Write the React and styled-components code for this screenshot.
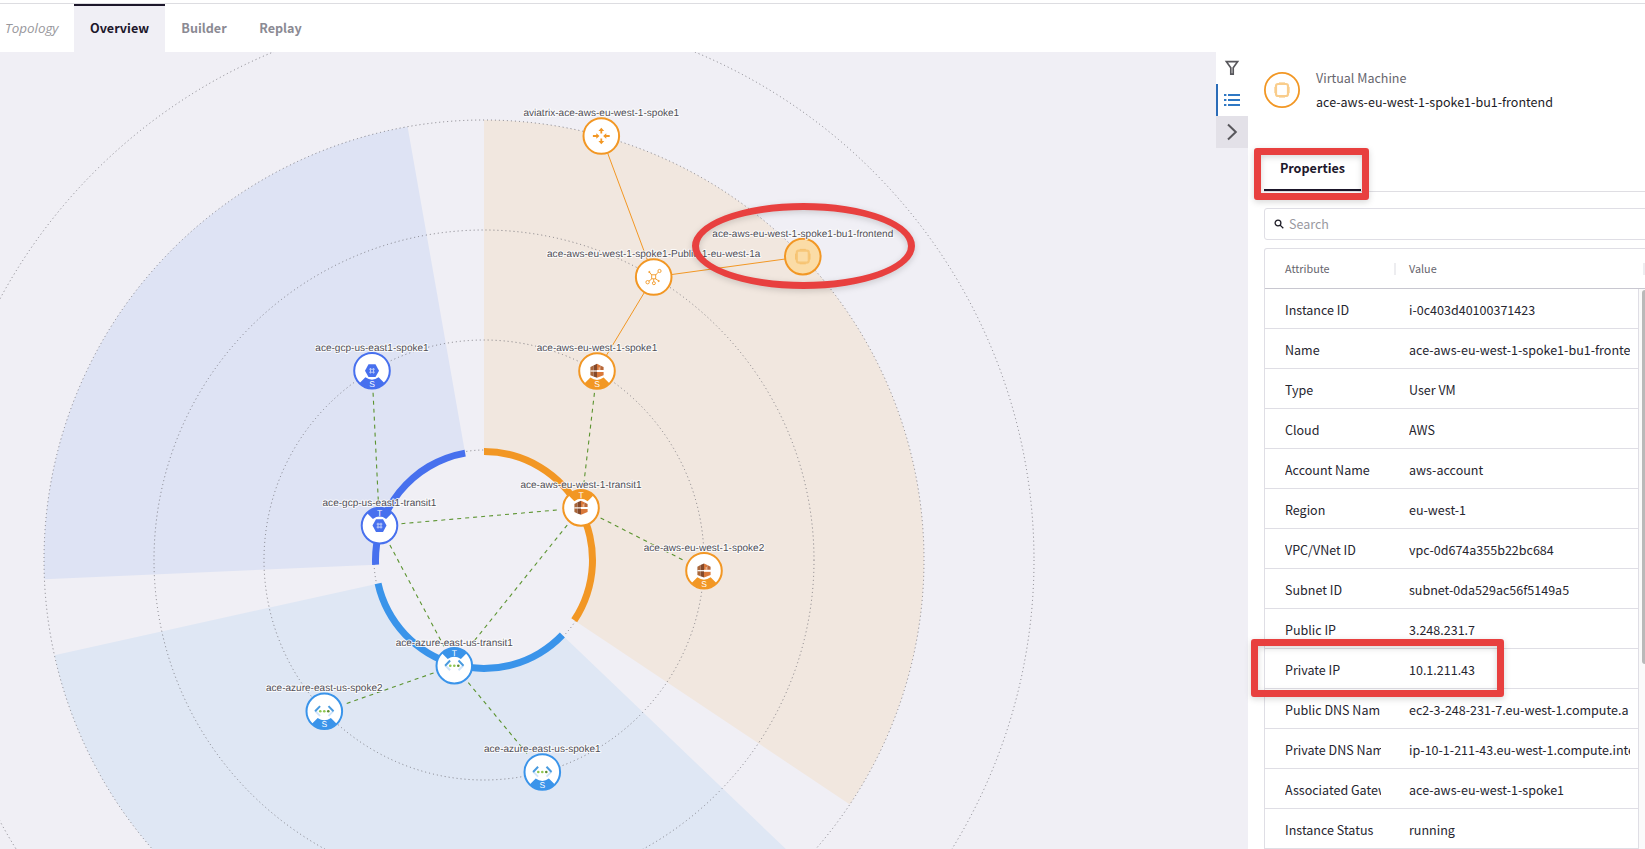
import React from "react";
import styled, { createGlobalStyle, css } from "styled-components";

const ORANGE = "#f29724";
const AZURE = "#3a94ea";
const GCP = "#4770ee";
const RED = "#e8403f";

const GlobalStyle = createGlobalStyle`
  * { box-sizing: border-box; }
  html, body { margin: 0; padding: 0; }
  body {
    background: #fff;
    color: #26252f;
    font-family: "Noto Sans CJK SC", "Open Sans", sans-serif;
    overflow: hidden;
  }
`;

const Page = styled.div`
  position: relative;
  display: flex;
  flex-direction: column;
  width: 1645px;
  height: 849px;
  overflow: hidden;
`;

const Header = styled.header`
  display: flex;
  flex: none;
  height: 49px;
  margin-top: 3px;
  border-top: 1px solid #dddde1;
`;

const SectionTitle = styled.div`
  width: 74px;
  padding-left: 5px;
  font: italic 13.4px/48px "Open Sans", sans-serif;
  color: #98979c;
`;

const Tab = styled.button`
  padding: 0 0 2px;
  border: 0;
  border-top: 2px solid transparent;
  background: none;
  width: ${(p) => p.$width}px;
  font: 700 12.6px/40px "Noto Sans CJK SC", sans-serif;
  color: #8b8a93;
  text-align: center;
  ${(p) =>
    p.$active &&
    css`
      background: #f0eff5;
      border-top-color: #1d172b;
      color: #1d172b;
    `}
`;

const Body = styled.main`
  display: flex;
  flex: 1;
  min-height: 0;
`;

const Canvas = styled.section`
  flex: none;
  width: 1216px;
  background: #f0eff5;
  overflow: hidden;
  svg { display: block; }
`;

const Rail = styled.nav`
  display: flex;
  flex-direction: column;
  flex: none;
  width: 32px;
  background: #f0eff5;
`;

const RailButton = styled.button`
  display: flex;
  align-items: center;
  justify-content: center;
  width: 32px;
  height: 32px;
  padding: 0;
  border: 0;
  color: #58575c;
  background: ${(p) => (p.$muted ? "#e3e1e8" : "#fff")};
  box-shadow: ${(p) => (p.$selected ? "inset 2px 0 0 #2b6cb8" : "none")};
`;

const Panel = styled.aside`
  display: flex;
  flex-direction: column;
  flex: 1;
  min-width: 0;
  padding-left: 16px;
`;

const Entity = styled.div`
  display: flex;
  align-items: center;
  gap: 16px;
  height: 76px;
`;

const EntityText = styled.div`
  display: flex;
  flex-direction: column;
  line-height: 24px;
  font-size: 12.53px;
`;

const EntityKind = styled.span`
  color: #66656d;
`;

const EntityName = styled.span`
  color: #1d1b26;
`;

const PanelTabs = styled.div`
  display: flex;
  height: 44px;
  margin-top: 20px;
  border-bottom: 1px solid #dfdee3;
`;

const PanelTab = styled.button`
  width: 97px;
  height: 43px;
  padding: 0 0 1px;
  border: 0;
  border-bottom: 2px solid #1d172b;
  background: none;
  color: #1d172b;
  font: 700 12.6px/36px "Noto Sans CJK SC", sans-serif;
`;

const SearchBox = styled.label`
  display: flex;
  align-items: center;
  flex: none;
  gap: 5px;
  height: 32px;
  margin: 16px -6px 0 0;
  padding-left: 9px;
  border: 1px solid #dfdee5;
  border-radius: 3px;
  color: #9a999f;
  font-size: 12.53px;
  line-height: 30px;
`;

const Table = styled.div`
  flex: none;
  margin: 8px -6px 0 0;
  border: 1px solid #dfdee5;
  border-bottom: 0;
  border-radius: 3px 3px 0 0;
`;

const TableHead = styled.div`
  display: flex;
  align-items: center;
  height: 40px;
  padding: 0 0 2px 20px;
  border-bottom: 1px solid #c8c7d0;
  color: #66656d;
  font-size: 10.8px;
  line-height: 36px;
`;

const HeadCell = styled.div`
  display: flex;
  align-items: flex-start;
  justify-content: space-between;
  flex: none;
  width: ${(p) => p.$width}px;
  margin-right: 13px;
  &::after {
    content: "";
    width: 2px;
    height: 12px;
    margin-top: 13px;
    background: #ededf0;
  }
`;

const TableBody = styled.div`
  display: flex;
  height: 560px;
`;

const Rows = styled.div`
  width: 374px;
  border-right: 1px solid #dfdee5;
`;

const Row = styled.div`
  display: flex;
  height: 40px;
  padding-left: 20px;
  border-bottom: 1px solid #dfdee5;
  font-size: 12.53px;
  line-height: 41px;
`;

const Cell = styled.div`
  flex: none;
  width: ${(p) => p.$width}px;
  margin-right: 28px;
  overflow: hidden;
  white-space: nowrap;
`;

const ScrollTrack = styled.div`
  width: 10px;
  padding: 1px 0 0 3px;
  background: #fafafa;
`;

const ScrollThumb = styled.div`
  width: 8px;
  height: 374px;
  border-radius: 3px;
  background: #b9b9b9;
`;

const Callout = styled.div`
  position: absolute;
  left: ${(p) => p.$x}px;
  top: ${(p) => p.$y}px;
  width: ${(p) => p.$w}px;
  height: ${(p) => p.$h}px;
  border: 7px solid ${RED};
  border-radius: ${(p) => (p.$round ? "50%" : "3px")};
  filter: drop-shadow(0 2px 3px rgba(0, 0, 0, 0.16));
  pointer-events: none;
`;

const CX = 484;
const CY = 560;

const polar = (r, deg) => {
  const a = ((deg - 90) * Math.PI) / 180;
  return [CX + r * Math.cos(a), CY + r * Math.sin(a)];
};

const ringSlice = (r0, r1, a0, a1) => {
  const p = [polar(r1, a0), polar(r1, a1), polar(r0, a1), polar(r0, a0)];
  return `M${p[0]}A${r1} ${r1} 0 0 1 ${p[1]}L${p[2]}A${r0} ${r0} 0 0 0 ${p[3]}Z`;
};

const regions = [
  { from: 0, to: 123.75, color: ORANGE, fill: "#f1e7df" },
  { from: 133.75, to: 257.5, color: AZURE, fill: "#dfe7f4" },
  { from: 267.5, to: 350, color: GCP, fill: "#dee3f4" },
];

const nodes = {
  aviatrix: { x: 601.3, y: 136, label: "aviatrix-ace-aws-eu-west-1-spoke1", color: ORANGE, icon: "gateway" },
  subnet: { x: 653.7, y: 277, label: "ace-aws-eu-west-1-spoke1-Public-1-eu-west-1a", color: ORANGE, icon: "subnet" },
  frontend: { x: 802.8, y: 256.6, label: "ace-aws-eu-west-1-spoke1-bu1-frontend", color: ORANGE, icon: "vm", selected: true },
  gcpSpoke: { x: 372, y: 370.7, label: "ace-gcp-us-east1-spoke1", color: GCP, icon: "gcp", role: "S" },
  awsSpoke1: { x: 597, y: 371, label: "ace-aws-eu-west-1-spoke1", color: ORANGE, icon: "aws", role: "S" },
  awsTransit: { x: 581, y: 507.9, label: "ace-aws-eu-west-1-transit1", color: ORANGE, icon: "aws", role: "T" },
  gcpTransit: { x: 379.5, y: 525.6, label: "ace-gcp-us-east1-transit1", color: GCP, icon: "gcp", role: "T" },
  awsSpoke2: { x: 704, y: 570.7, label: "ace-aws-eu-west-1-spoke2", color: ORANGE, icon: "aws", role: "S" },
  azTransit: { x: 454.3, y: 665.7, label: "ace-azure-east-us-transit1", color: AZURE, icon: "azure", role: "T" },
  azSpoke2: { x: 324.3, y: 711.3, label: "ace-azure-east-us-spoke2", color: AZURE, icon: "azure", role: "S" },
  azSpoke1: { x: 542.3, y: 772, label: "ace-azure-east-us-spoke1", color: AZURE, icon: "azure", role: "S" },
};

const links = [
  ["aviatrix", "subnet"],
  ["subnet", "frontend"],
  ["subnet", "awsSpoke1"],
];

const tunnels = [
  ["gcpSpoke", "gcpTransit"],
  ["awsSpoke1", "awsTransit"],
  ["gcpTransit", "awsTransit"],
  ["gcpTransit", "azTransit"],
  ["awsTransit", "azTransit"],
  ["awsTransit", "awsSpoke2"],
  ["azTransit", "azSpoke2"],
  ["azTransit", "azSpoke1"],
];

const NodeLabel = styled.text`
  font-family: "Liberation Sans", Arial, sans-serif;
  font-size: 10.05px;
  font-kerning: none;
  text-rendering: geometricPrecision;
  text-anchor: middle;
  fill: #504e56;
  stroke: #fff;
  stroke-opacity: 0.85;
  stroke-width: 2px;
  stroke-linejoin: round;
  paint-order: stroke;
`;

const RoleLetter = styled.text`
  font-family: "Liberation Sans", Arial, sans-serif;
  font-size: 8.5px;
  text-rendering: geometricPrecision;
  text-anchor: middle;
  fill: #fff;
`;

function GatewayIcon() {
  return (
    <g fill={ORANGE}>
      {[0, 180].map((a) => (
        <g key={a} transform={`rotate(${a})`}>
          <path d="M0-8.2L2.9-5H.9V-2.4H-.9V-5H-2.9Z" />
          <path d="M-1.8 0L-5-2.7V-.9H-8.4V.9H-5V2.7Z" />
        </g>
      ))}
    </g>
  );
}

function SubnetIcon() {
  return (
    <g fill="none" stroke={ORANGE} strokeWidth="0.9">
      <rect x="-2" y="-2.2" width="4" height="4" />
      <path d="M2-2L4.6-4.9M-2-2L-4.2-4.8M-2 2L-4.8 4.2M0 2V4.6M2 2L4.6 3.6" />
      <circle cx="5.8" cy="-6" r="1.6" />
      <circle cx="-6.1" cy="5.2" r="1.7" />
      <circle cx="0.2" cy="6.2" r="1.5" />
      <circle cx="5" cy="4" r="0.6" fill={ORANGE} />
      <circle cx="-4.4" cy="-5" r="0.6" fill={ORANGE} />
    </g>
  );
}

function VmIcon({ strong }) {
  return (
    <g fill="none" stroke={strong ? "#f6bf68" : "#f9cd8c"}>
      <rect x="-6" y="-6" width="12" height="12" rx="2" strokeWidth="2.2" strokeOpacity={strong ? 0.75 : 1} />
      <path d="M-3-7.2H3M-3 7.2H3M-7.2-3V3M7.2-3V3" strokeWidth="0.9" />
    </g>
  );
}

function AwsIcon() {
  return (
    <g>
      <path d="M-6.6-4L-3.5-5.6V5.6L-6.6 4.2Z" fill="#a9663a" />
      <path d="M-3.5-5.6L0-7.2V6.8L-3.5 5.6Z" fill="#84492a" />
      <path d="M0-7.2L3.3-5.6V-1H0ZM0 1H6.6V4.2L0 6.8Z" fill="#d9783a" />
      <path d="M3.3-5.6L6.6-4V-1H3.3Z" fill="#b8683a" />
      <path d="M-6.6 0H6.6" stroke="#fff" strokeWidth="1.2" />
      <path d="M2.2-3.6V-1" stroke="#fbe3d0" strokeWidth="0.8" />
    </g>
  );
}

function GcpIcon() {
  return (
    <g>
      <path d="M-3.5-6.4H3.5L7 0L3.5 6.4H-3.5L-7 0Z" fill={GCP} />
      <path d="M-1.5-2.8V2.8M1.5-2.8V2.8M-2.8-1.5H2.8M-2.8 1.5H2.8" stroke="#fff" strokeOpacity="0.6" strokeWidth="1.1" />
    </g>
  );
}

function AzureIcon() {
  return (
    <g fill="none" strokeWidth="2">
      <path d="M-9.2-.4L-4.2 4.6M9.2-.4L4.2 4.6" stroke="#cfe4fa" />
      <path d="M-4.2-5.2L-9.2 0M4.2-5.2L9.2 0" stroke="#4a9bdf" />
      <circle cx="-4" cy="0" r="1.3" fill="#8fc751" />
      <circle cx="0" cy="0" r="1.3" fill="#8fc751" />
      <circle cx="4" cy="0" r="1.3" fill="#5f8f2f" />
    </g>
  );
}

const icons = {
  gateway: GatewayIcon,
  subnet: SubnetIcon,
  vm: VmIcon,
  aws: AwsIcon,
  gcp: GcpIcon,
  azure: AzureIcon,
};

function Node({ node }) {
  const Icon = icons[node.icon];
  const top = node.role === "T";
  return (
    <g transform={`translate(${node.x} ${node.y})`}>
      <circle r="17.8" fill={node.selected ? "#fbdca6" : "#fff"} />
      {node.role && (
        <path
          transform={top ? "rotate(180)" : undefined}
          d="M-12.6 12.6L-6.6 6.6Q0 11.5 6.6 6.6L12.6 12.6A17.8 17.8 0 0 1-12.6 12.6Z"
          fill={node.color}
        />
      )}
      <circle r="17.8" fill="none" stroke={node.color} strokeWidth="2" />
      <Icon strong={node.selected} />
      {node.role && <RoleLetter y={top ? -9.6 : 16.2}>{node.role}</RoleLetter>}
    </g>
  );
}

function Link({ ends, dashed }) {
  const [a, b] = ends.map((k) => nodes[k]);
  const len = Math.hypot(b.x - a.x, b.y - a.y);
  const trim = dashed ? 22 : 18;
  const ux = ((b.x - a.x) / len) * trim;
  const uy = ((b.y - a.y) / len) * trim;
  return (
    <line
      x1={a.x + ux}
      y1={a.y + uy}
      x2={b.x - ux}
      y2={b.y - uy}
      stroke={dashed ? "#5c9430" : ORANGE}
      strokeWidth={dashed ? 1.1 : 1}
      strokeDasharray={dashed ? "4 4" : undefined}
    />
  );
}

function TopologyMap() {
  return (
    <svg width="1216" height="797" viewBox="0 52 1216 797">
      {regions.map((r) => (
        <path key={r.from} d={ringSlice(108, 440, r.from, r.to)} fill={r.fill} />
      ))}
      {[110, 220, 330, 440, 550].map((r) => (
        <circle key={r} cx={CX} cy={CY} r={r} fill="none" stroke="#6c6b72" strokeOpacity="0.85" strokeWidth="1" strokeDasharray="1 3" />
      ))}
      {regions.map((r) => (
        <path key={r.from} d={ringSlice(105, 112, r.from, r.to)} fill={r.color} />
      ))}
      {links.map((l) => <Link key={l.join()} ends={l} />)}
      {tunnels.map((l) => <Link key={l.join()} ends={l} dashed />)}
      {Object.entries(nodes).map(([k, n]) => <Node key={k} node={n} />)}
      {Object.entries(nodes).map(([k, n]) => (
        <NodeLabel key={k} x={n.x} y={n.y - 20}>{n.label}</NodeLabel>
      ))}
    </svg>
  );
}

const properties = [
  ["Instance ID", "i-0c403d40100371423"],
  ["Name", "ace-aws-eu-west-1-spoke1-bu1-frontend"],
  ["Type", "User VM"],
  ["Cloud", "AWS"],
  ["Account Name", "aws-account"],
  ["Region", "eu-west-1"],
  ["VPC/VNet ID", "vpc-0d674a355b22bc684"],
  ["Subnet ID", "subnet-0da529ac56f5149a5"],
  ["Public IP", "3.248.231.7"],
  ["Private IP", "10.1.211.43"],
  ["Public DNS Nam", "ec2-3-248-231-7.eu-west-1.compute.a"],
  ["Private DNS Name", "ip-10-1-211-43.eu-west-1.compute.internal"],
  ["Associated Gateway", "ace-aws-eu-west-1-spoke1"],
  ["Instance Status", "running"],
];

export default function App() {
  return (
    <Page>
      <GlobalStyle />
      <Header>
        <SectionTitle>Topology</SectionTitle>
        <Tab $width={91} $active>Overview</Tab>
        <Tab $width={78}>Builder</Tab>
        <Tab $width={75}>Replay</Tab>
      </Header>
      <Body>
        <Canvas><TopologyMap /></Canvas>
        <Rail>
          <RailButton aria-label="Filter">
            <svg width="16" height="16" fill="none" stroke="currentColor" strokeWidth="1.7">
              <path d="M2.4 1.7H13.6L9.2 7.8V14.2H6.8V7.8Z" />
            </svg>
          </RailButton>
          <RailButton aria-label="Details" $selected>
            <svg width="16" height="16" stroke="#2f78c4" strokeWidth="2">
              <path d="M4 3H16M4 8H16M4 13H16M0 3H2.4M0 8H2.4M0 13H2.4" />
            </svg>
          </RailButton>
          <RailButton aria-label="Collapse" $muted>
            <svg width="16" height="18" fill="none" stroke="currentColor" strokeWidth="2">
              <path d="M4 1.5L11.8 9L4 16.5" />
            </svg>
          </RailButton>
        </Rail>
        <Panel>
          <Entity>
            <svg width="36" height="36" viewBox="-18 -18 36 36">
              <circle r="17.1" fill="#fff" stroke={ORANGE} strokeWidth="1.8" />
              <VmIcon />
            </svg>
            <EntityText>
              <EntityKind>Virtual Machine</EntityKind>
              <EntityName>ace-aws-eu-west-1-spoke1-bu1-frontend</EntityName>
            </EntityText>
          </Entity>
          <PanelTabs><PanelTab>Properties</PanelTab></PanelTabs>
          <SearchBox>
            <svg width="10" height="10" fill="none" stroke="#1d1b26" strokeWidth="1.3">
              <circle cx="4" cy="4" r="2.9" />
              <path d="M6.1 6.1L9.3 9.3" />
            </svg>
            Search
          </SearchBox>
          <Table>
            <TableHead>
              <HeadCell $width={111}>Attribute</HeadCell>
              <HeadCell $width={236}>Value</HeadCell>
            </TableHead>
            <TableBody>
              <Rows>
                {properties.map(([name, value]) => (
                  <Row key={name}>
                    <Cell $width={96}>{name}</Cell>
                    <Cell $width={221}>{value}</Cell>
                  </Row>
                ))}
              </Rows>
              <ScrollTrack><ScrollThumb /></ScrollTrack>
            </TableBody>
          </Table>
        </Panel>
      </Body>
      <Callout $x={691.5} $y={203} $w={223.5} $h={86} $round />
      <Callout $x={1253.5} $y={148} $w={115.3} $h={52} />
      <Callout $x={1251.4} $y={639} $w={252.4} $h={57.7} />
    </Page>
  );
}
